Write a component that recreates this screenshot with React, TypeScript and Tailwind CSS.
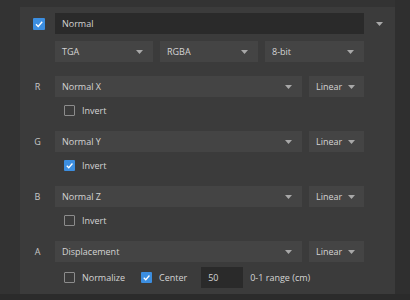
import React from "react";

const Arrow = () => (
  <svg width="7" height="4" viewBox="0 0 7 4" className="shrink-0">
    <path d="M0 0 L7 0 L3.5 4 Z" fill="#a8a8a8" />
  </svg>
);

const Check = ({ checked, size = 11 }: { checked?: boolean; size?: number }) => (
  <div
    className={
      checked
        ? "flex items-center justify-center bg-[#3c8ee0] rounded-[1px]"
        : "border border-[#8c8c8c] rounded-[1px]"
    }
    style={{ width: size, height: size }}
  >
    {checked && (
      <svg width={size} height={size} viewBox="0 0 12 12">
        <path d="M3 6.2 L5.2 8.4 L9.2 3.8" stroke="#ffffff" strokeWidth="1.4" fill="none" />
      </svg>
    )}
  </div>
);

const Select = ({ label, w, pr = 10 }: { label: string; w: number; pr?: number }) => (
  <div
    className="h-[21px] bg-[#444444] flex items-center justify-between pl-[7px]"
    style={{ width: w, paddingRight: pr }}
  >
    <span>{label}</span>
    <Arrow />
  </div>
);

const Channel = ({ l, name, checked }: { l: string; name: string; checked?: boolean }) => (
  <div className="flex flex-col">
    <div className="flex items-center">
      <div className="w-[35px] text-center text-[#c8c8c8]">{l}</div>
      <div className="flex gap-[7px]">
        <Select label={name} w={247} />
        <Select label="Linear" w={55} pr={9} />
      </div>
    </div>
    <div className="h-[34px] pt-[8px] pl-[44px] flex items-start gap-[7px]">
      <Check checked={checked} />
      <span className="leading-[11px]">Invert</span>
    </div>
  </div>
);

export default function App() {
  return (
    <div
      className="w-[410px] h-[300px] bg-[#333333] flex flex-col text-[9px] text-[#d4d4d4]"
      style={{ fontFamily: '"Open Sans", "Noto Sans", sans-serif' }}
    >
      <div className="flex flex-1">
        <div className="w-[20px]" />
        <div className="w-[375px] mt-[7px] bg-[#3b3b3b] flex flex-col pt-[6px]">
          <div className="flex items-center">
            <div className="w-[35px] flex justify-center pl-[2px]">
              <Check checked size={12} />
            </div>
            <div className="w-[309px] h-[21px] bg-[#2a2a2a] flex items-center pl-[7px]">Normal</div>
            <div className="flex-1 flex justify-center">
              <Arrow />
            </div>
          </div>
          <div className="flex gap-[7px] pl-[35px] mt-[7px]">
            <Select label="TGA" w={98} />
            <Select label="RGBA" w={98} />
            <Select label="8-bit" w={99} />
          </div>
          <div className="mt-[14px]">
            <Channel l="R" name="Normal X" />
            <Channel l="G" name="Normal Y" checked />
            <Channel l="B" name="Normal Z" />
            <div className="flex items-center">
              <div className="w-[35px] text-center text-[#c8c8c8]">A</div>
              <div className="flex gap-[7px]">
                <Select label="Displacement" w={247} />
                <Select label="Linear" w={55} pr={9} />
              </div>
            </div>
            <div className="flex items-center mt-[5px] h-[21px] pl-[44px]">
              <Check />
              <span className="ml-[7px]">Normalize</span>
              <div className="ml-[16px]">
                <Check checked />
              </div>
              <span className="ml-[7px]">Center</span>
              <div className="ml-[14px] w-[42px] h-[21px] bg-[#2a2a2a] flex items-center pl-[7px]">50</div>
              <span className="ml-[7px]">0-1 range (cm)</span>
            </div>
          </div>
        </div>
        <div className="flex-1 bg-[#2f2f2f]" />
      </div>
      <div className="h-[6px] bg-[#2b2b2b]" />
    </div>
  );
}
